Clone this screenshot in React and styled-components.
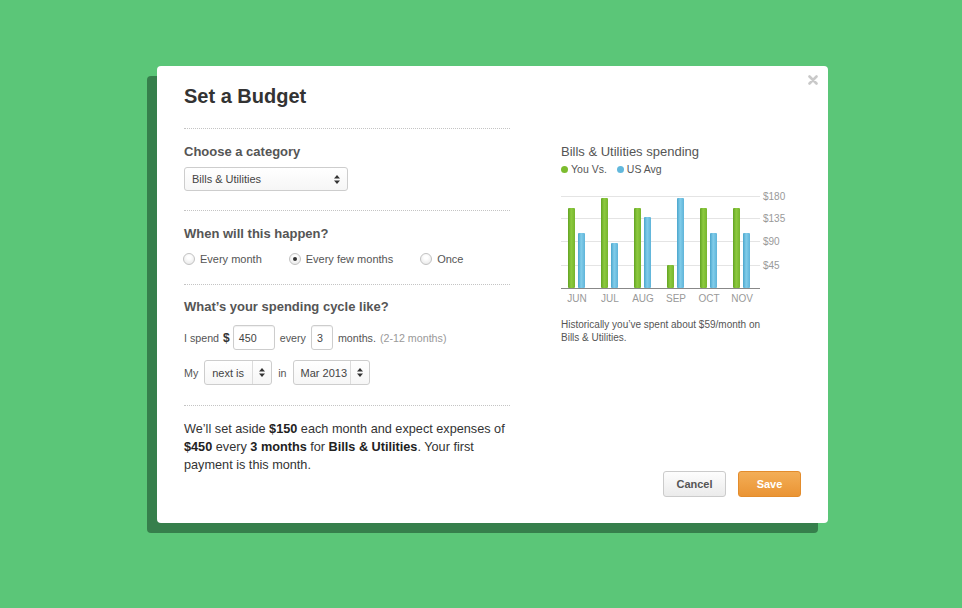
import React from 'react';
import styled, { createGlobalStyle } from 'styled-components';

const GlobalStyle = createGlobalStyle`
  html, body {
    margin: 0;
    padding: 0;
    background: #5bc678;
  }
  body {
    font-family: "Liberation Sans", Arial, Helvetica, sans-serif;
    -webkit-font-smoothing: antialiased;
  }
`;

const months = [
  { label: 'JUN', you: 208, avg: 233 },
  { label: 'JUL', you: 198, avg: 243 },
  { label: 'AUG', you: 208, avg: 217 },
  { label: 'SEP', you: 265, avg: 198 },
  { label: 'OCT', you: 208, avg: 233 },
  { label: 'NOV', you: 208, avg: 233 }
];

const ticks = [
  { label: '$180', y: 196 },
  { label: '$135', y: 218 },
  { label: '$90', y: 241 },
  { label: '$45', y: 265 }
];

const Page = styled.div`
  width: 962px;
  height: 608px;
  box-sizing: border-box;
  padding: 66px 0 0 157px;
  background: #5bc678;
`;

const Modal = styled.div`
  position: relative;
  width: 671px;
  height: 457px;
  box-sizing: border-box;
  padding: 18px 27px 26px 27px;
  background: #fff;
  border-radius: 4px;
  box-shadow: -10px 10px 0 #367f4c;
  display: grid;
  grid-template-columns: 326px 240px;
  column-gap: 51px;
`;

const Close = styled.button`
  position: absolute;
  top: 8px;
  right: 9px;
  width: 12px;
  height: 12px;
  padding: 0;
  border: 0;
  background: none;
  display: flex;
  align-items: center;
  justify-content: center;
  cursor: pointer;
`;

const LeftColumn = styled.div`
  display: flex;
  flex-direction: column;
`;

const Title = styled.h1`
  margin: 0 0 20px 0;
  font-size: 20px;
  line-height: 24px;
  font-weight: bold;
  color: #333;
`;

const Section = styled.div`
  border-top: 1px dotted #c4c4c4;
  padding: ${({ $pad }) => $pad || '15px 0 18px'};
`;

const Heading = styled.h2`
  margin: 0;
  font-size: 13px;
  line-height: 16px;
  font-weight: bold;
  color: #555;
`;

const SelectBox = styled.div`
  width: ${({ $width }) => $width}px;
  height: ${({ $height }) => $height || 25}px;
  box-sizing: border-box;
  margin-top: ${({ $top }) => $top || 0}px;
  border: 1px solid #cdcdcd;
  border-radius: 3px;
  background: linear-gradient(#ffffff, #f6f6f6);
  display: flex;
  align-items: stretch;
  font-size: 11px;
  color: #444;
`;

const SelectText = styled.span`
  flex: 1;
  display: flex;
  align-items: center;
  padding-left: 7px;
`;

const SelectArrow = styled.span`
  width: ${({ $divided }) => ($divided ? 18 : 20)}px;
  display: flex;
  align-items: center;
  justify-content: center;
  border-left: ${({ $divided }) => ($divided ? '1px solid #dcdcdc' : '0')};
`;

const RadioRow = styled.div`
  display: flex;
  align-items: center;
  gap: 27px;
  margin: 10px 0 0 -1px;
`;

const RadioOption = styled.label`
  display: flex;
  align-items: center;
  gap: 5px;
  font-size: 11px;
  line-height: 14px;
  color: #555;
`;

const RadioDot = styled.span`
  width: 12px;
  height: 12px;
  box-sizing: border-box;
  border-radius: 50%;
  border: 1px solid #c2c2c2;
  background: radial-gradient(circle at 50% 35%, #ffffff 20%, #e4e4e4 100%);
  display: flex;
  align-items: center;
  justify-content: center;

  &::after {
    content: '';
    width: 4px;
    height: 4px;
    border-radius: 50%;
    background: ${({ $checked }) => ($checked ? '#333' : 'transparent')};
  }
`;

const FieldRow = styled.div`
  display: flex;
  align-items: center;
  gap: ${({ $gap }) => $gap || 4}px;
  margin-top: ${({ $top }) => $top}px;
  font-size: 10.7px;
  color: #555;
`;

const Strong = styled.b`
  color: #333;
  font-size: 12px;
  margin: 0 -2px 0 0;
`;

const Hint = styled.span`
  color: #999;
`;

const TextInput = styled.div`
  width: ${({ $width }) => $width}px;
  height: 25px;
  box-sizing: border-box;
  margin: 0 1px;
  border: 1px solid #cdcdcd;
  border-radius: 3px;
  background: #fff;
  box-shadow: inset 0 1px 1px rgba(0, 0, 0, 0.06);
  display: flex;
  align-items: center;
  padding-left: 5px;
  color: #444;
`;

const Summary = styled.p`
  margin: 0;
  font-size: 12.7px;
  line-height: 18px;
  color: #333;

  b {
    color: #222;
  }
`;

const RightColumn = styled.div`
  display: flex;
  flex-direction: column;
  padding-top: 60px;
`;

const ChartTitle = styled.div`
  font-size: 13px;
  line-height: 16px;
  color: #555;
`;

const Legend = styled.div`
  display: flex;
  align-items: center;
  gap: 10px;
  margin-top: 2px;
  font-size: 10.5px;
  line-height: 14px;
  color: #555;
`;

const LegendItem = styled.span`
  display: flex;
  align-items: center;
  gap: 3px;

  &::before {
    content: '';
    width: 7px;
    height: 7px;
    border-radius: 50%;
    background: ${({ $color }) => $color};
  }
`;

const ChartSvg = styled.svg`
  display: block;
  margin-top: 10px;
  overflow: visible;
`;

const Note = styled.p`
  margin: 12px 0 0 0;
  font-size: 10px;
  line-height: 13px;
  color: #555;
`;

const Footer = styled.div`
  margin-top: auto;
  display: flex;
  justify-content: flex-end;
  gap: 12px;
`;

const Button = styled.button`
  width: 63px;
  height: 26px;
  box-sizing: border-box;
  border-radius: 3px;
  font-family: inherit;
  font-size: 11px;
  font-weight: bold;
  cursor: pointer;
  border: 1px solid ${({ $primary }) => ($primary ? '#e38c2c' : '#cbcbcb')};
  color: ${({ $primary }) => ($primary ? '#fff' : '#555')};
  background: ${({ $primary }) =>
    $primary
      ? 'linear-gradient(#f3ae57, #ea9434)'
      : 'linear-gradient(#fdfdfd, #ebebeb)'};
`;

const Arrows = () => (
  <svg width="6" height="9" viewBox="0 0 6 9">
    <path d="M3 0 L6 3.5 L0 3.5 Z" fill="#333" />
    <path d="M3 9 L6 5.5 L0 5.5 Z" fill="#333" />
  </svg>
);

const Select = ({ value, width, height, top, divided }) => (
  <SelectBox $width={width} $height={height} $top={top}>
    <SelectText>{value}</SelectText>
    <SelectArrow $divided={divided}>
      <Arrows />
    </SelectArrow>
  </SelectBox>
);

const Chart = () => {
  const top = 186;
  return (
    <ChartSvg width="225" height="120" viewBox="0 0 225 120">
      <defs>
        <linearGradient id="gYou" x1="0" x2="1" y1="0" y2="0">
          <stop offset="0" stopColor="#62a322" />
          <stop offset="0.45" stopColor="#8dca3f" />
          <stop offset="1" stopColor="#76b52d" />
        </linearGradient>
        <linearGradient id="gAvg" x1="0" x2="1" y1="0" y2="0">
          <stop offset="0" stopColor="#4aa5cc" />
          <stop offset="0.45" stopColor="#82cdea" />
          <stop offset="1" stopColor="#5fb4d9" />
        </linearGradient>
      </defs>
      {ticks.map((t) => (
        <g key={t.label}>
          <line x1="0" x2="199" y1={t.y - top + 0.5} y2={t.y - top + 0.5} stroke="#e4e4e4" />
          <text x="202" y={t.y - top + 4} fontSize="10" fill="#999" fontFamily="Liberation Sans, Arial, sans-serif">
            {t.label}
          </text>
        </g>
      ))}
      {months.map((m, i) => {
        const gx = 7 + i * 33;
        return (
          <g key={m.label}>
            <rect x={gx} y={m.you - top} width="7" height={288 - m.you} rx="1" fill="url(#gYou)" />
            <rect x={gx + 10} y={m.avg - top} width="7" height={288 - m.avg} rx="1" fill="url(#gAvg)" />
            <text
              x={gx + 9}
              y={116}
              textAnchor="middle"
              fontSize="10"
              fill="#999"
              fontFamily="Liberation Sans, Arial, sans-serif"
            >
              {m.label}
            </text>
          </g>
        );
      })}
      <line x1="0" x2="199" y1={102.5} y2={102.5} stroke="#888" />
    </ChartSvg>
  );
};

export default function App() {
  return (
    <>
      <GlobalStyle />
      <Page>
        <Modal>
          <Close aria-label="Close">
            <svg width="10" height="10" viewBox="0 0 10 10">
              <path d="M1.5 1.5 L8.5 8.5 M8.5 1.5 L1.5 8.5" stroke="#c9c9c9" strokeWidth="2.6" strokeLinecap="round" />
            </svg>
          </Close>

          <LeftColumn>
            <Title>Set a Budget</Title>

            <Section $pad="15px 0 19px">
              <Heading>Choose a category</Heading>
              <Select value="Bills & Utilities" width={164} height={24} top={7} />
            </Section>

            <Section $pad="15px 0 18px">
              <Heading>When will this happen?</Heading>
              <RadioRow>
                <RadioOption>
                  <RadioDot />
                  Every month
                </RadioOption>
                <RadioOption>
                  <RadioDot $checked />
                  Every few months
                </RadioOption>
                <RadioOption>
                  <RadioDot />
                  Once
                </RadioOption>
              </RadioRow>
            </Section>

            <Section $pad="14px 0 20px">
              <Heading>What’s your spending cycle like?</Heading>
              <FieldRow $top={10}>
                <span>I spend</span>
                <Strong>$</Strong>
                <TextInput $width={42}>450</TextInput>
                <span>every</span>
                <TextInput $width={22}>3</TextInput>
                <span>months.</span>
                <Hint>(2-12 months)</Hint>
              </FieldRow>
              <FieldRow $top={10} $gap={6}>
                <span>My</span>
                <Select value="next is" width={68} divided />
                <span>in</span>
                <Select value="Mar 2013" width={77} divided />
              </FieldRow>
            </Section>

            <Section $pad="14px 0 0">
              <Summary>
                We’ll set aside <b>$150</b> each month and expect expenses of
                <br />
                <b>$450</b> every <b>3 months</b> for <b>Bills &amp; Utilities</b>. Your first
                <br />
                payment is this month.
              </Summary>
            </Section>
          </LeftColumn>

          <RightColumn>
            <ChartTitle>Bills &amp; Utilities spending</ChartTitle>
            <Legend>
              <LegendItem $color="#7cbc2e">You Vs.</LegendItem>
              <LegendItem $color="#62b8dc">US Avg</LegendItem>
            </Legend>
            <Chart />
            <Note>
              Historically you’ve spent about $59/month on
              <br />
              Bills &amp; Utilities.
            </Note>
            <Footer>
              <Button>Cancel</Button>
              <Button $primary>Save</Button>
            </Footer>
          </RightColumn>
        </Modal>
      </Page>
    </>
  );
}
